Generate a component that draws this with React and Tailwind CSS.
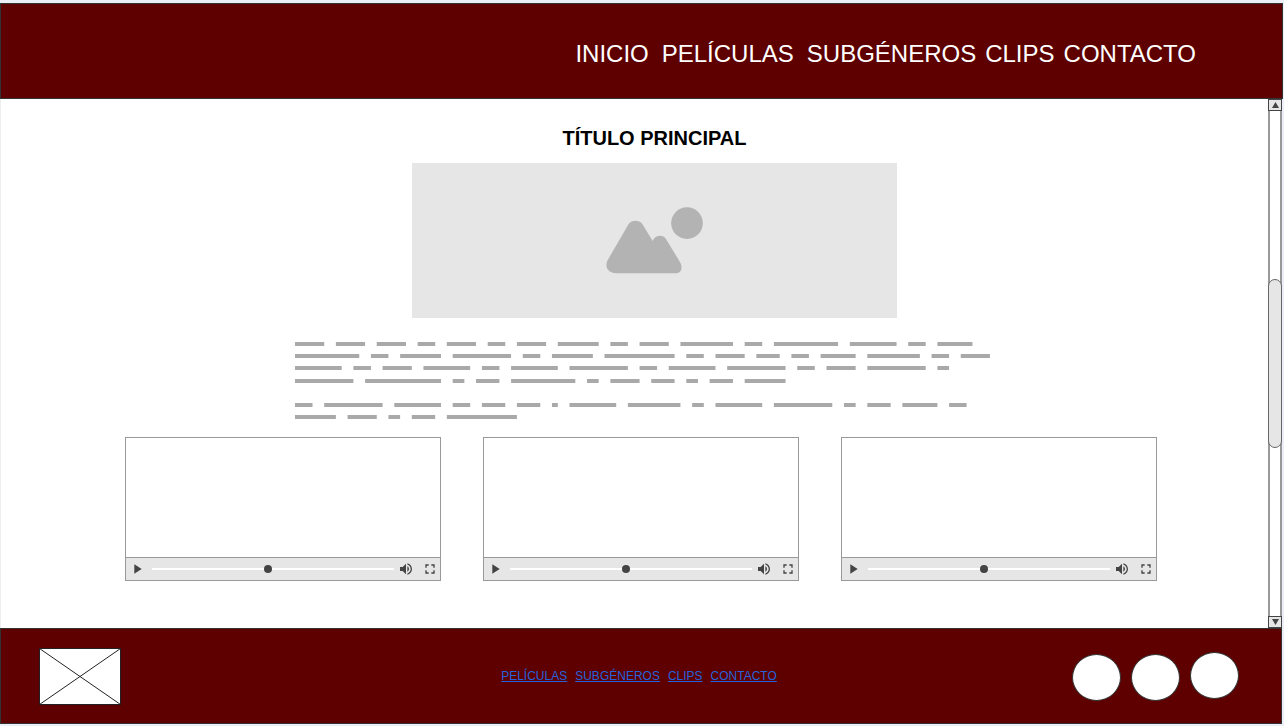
import { MdFullscreen, MdPlayArrow, MdVolumeUp } from "react-icons/md";

const UNIT = 5.84;

const paragraphs = [
  [
    { y: 0, words: [5, 5, 5, 3, 5, 3, 5, 7, 3, 5, 9, 3, 11, 8, 3, 6] },
    { y: 12, words: [11, 3, 7, 10, 3, 7, 12, 3, 5, 4, 3, 6, 9, 3, 5] },
    { y: 24, words: [8, 3, 5, 8, 3, 8, 10, 3, 8, 10, 3, 5, 10, 2] },
    { y: 37, words: [10, 13, 2, 4, 11, 2, 5, 4, 2, 4, 7] },
  ],
  [
    { y: 0, words: [3, 10, 8, 3, 4, 4, 1, 8, 9, 2, 8, 10, 2, 4, 6, 3] },
    { y: 12, words: [7, 5, 2, 4, 12] },
  ],
];

const navLinks = [
  { label: "INICIO", space: "pr-1" },
  { label: "PELÍCULAS", space: "pr-1" },
  { label: "SUBGÉNEROS", space: "" },
  { label: "CLIPS", space: "" },
  { label: "CONTACTO", space: "" },
];

const footerLinks = ["PELÍCULAS", "SUBGÉNEROS", "CLIPS", "CONTACTO"];

// Greeked text: each word is a bar, with two units of space between words.
function GreekedParagraph({ lines }) {
  const height = lines[lines.length - 1].y + 4;
  return (
    <svg
      className="block max-w-full fill-[#a9a9a9]"
      width="720"
      height={height}
      viewBox={`0 0 720 ${height}`}
      aria-hidden="true"
    >
      {lines.map(({ y, words }) => {
        let start = 0;
        return words.map((length, i) => {
          const x = start * UNIT;
          start += length + 2;
          return <rect key={`${y}-${i}`} x={x} y={y} width={length * UNIT} height="4" />;
        });
      })}
    </svg>
  );
}

function ImagePlaceholder() {
  return (
    <div className="flex h-[155px] w-full max-w-[485px] items-center justify-center bg-[#e6e6e6]">
      <svg className="fill-[#b3b3b3]" width="97" height="67" viewBox="49 36 291 201" aria-hidden="true">
        <path d="M117 87 C127 74 148 74 158 87 L189 138 C198 118 220 119 229 132 L272 203 C281 221 273 235 257 235 L80 235 C55 234 45 217 53 197 Z" />
        <circle cx="292" cy="84.500" r="47.500" />
      </svg>
    </div>
  );
}

function VideoPlayer({ number }) {
  return (
    <div className="border border-[#999999] bg-white">
      <div className="h-[119px]" />
      <div className="flex h-[23px] items-center border-t border-[#999999] bg-[#e6e6e6] pr-0.5 pl-[3px] text-[#444444]">
        <button type="button" aria-label="Reproducir" className="shrink-0">
          <MdPlayArrow size={16} className="block" />
        </button>
        <input
          type="range"
          min="0"
          max="100"
          defaultValue="48"
          aria-label={`Progreso del clip ${number}`}
          className="mr-1 ml-[7px] h-4 min-w-0 flex-1 appearance-none bg-transparent [&::-webkit-slider-runnable-track]:h-0.5 [&::-webkit-slider-runnable-track]:bg-white [&::-webkit-slider-thumb]:-mt-[3px] [&::-webkit-slider-thumb]:size-2 [&::-webkit-slider-thumb]:appearance-none [&::-webkit-slider-thumb]:rounded-full [&::-webkit-slider-thumb]:bg-[#444444]"
        />
        <button type="button" aria-label="Volumen" className="mr-2 shrink-0">
          <MdVolumeUp size={16} className="block" />
        </button>
        <button type="button" aria-label="Pantalla completa" className="shrink-0">
          <MdFullscreen size={16} className="block" />
        </button>
      </div>
    </div>
  );
}

function ScrollButton({ label, points }) {
  return (
    <button
      type="button"
      aria-label={label}
      className="flex h-3 w-full shrink-0 items-center justify-center border border-[#444444] bg-[#e6e6e6]"
    >
      <svg className="fill-[#444444]" width="7" height="6" viewBox="0 0 7 6">
        <polygon points={points} />
      </svg>
    </button>
  );
}

function ScrollBar() {
  return (
    <div className="mr-0.5 flex w-3.5 shrink-0 flex-col">
      <ScrollButton label="Subir" points="3.5,0 7,6 0,6" />
      <div className="flex flex-1 flex-col border-x-2 border-[#999999] bg-white">
        <div className="flex-1" />
        <div className="-mx-0.5 flex-1 rounded-full border border-[#666666] bg-[#e6e6e6]" />
        <div className="flex-1" />
      </div>
      <ScrollButton label="Bajar" points="0,0 7,0 3.5,6" />
    </div>
  );
}

export default function App() {
  return (
    <div className="min-h-screen bg-[#eceff6] pt-[3px] font-['Liberation_Sans',Arial,sans-serif]">
      <header className="mr-px flex h-24 items-center justify-end border border-[#333333] bg-[#5e0000] pr-[86px]">
        <nav aria-label="Principal">
          <ul className="flex gap-[9px] pt-1.5 text-2xl text-white">
            {navLinks.map(({ label, space }) => (
              <li key={label} className={space}>
                <a href="#">{label}</a>
              </li>
            ))}
          </ul>
        </nav>
      </header>

      <div className="flex">
        <main className="min-w-0 flex-1 border-l border-[#eeeeee] bg-white pb-[47px]">
          <section className="flex flex-col items-center pt-[25px] pl-10">
            <h1 className="text-xl leading-7 font-bold text-black">TÍTULO PRINCIPAL</h1>
            <div className="flex w-full justify-center pt-[11px]">
              <ImagePlaceholder />
            </div>
            <div className="flex flex-col gap-5 pt-6">
              {paragraphs.map((lines, i) => (
                <GreekedParagraph key={i} lines={lines} />
              ))}
            </div>
          </section>
          <section className="flex justify-center pt-[18px] pl-[13px]">
            <div className="grid w-full max-w-[1032px] grid-cols-3 gap-[42px]">
              {[1, 2, 3].map((number) => (
                <VideoPlayer key={number} number={number} />
              ))}
            </div>
          </section>
        </main>
        <ScrollBar />
      </div>

      <footer className="mr-0.5 grid h-24 grid-cols-[1fr_auto_1fr] items-center border border-[#333333] bg-[#5e0000]">
        <svg className="ml-[38px] stroke-[#222222]" width="82" height="57" viewBox="0 0 82 57" aria-hidden="true">
          <rect x="0.5" y="0.5" width="81" height="56" fill="white" />
          <path d="M0.5 0.5 L81.500 56.500 M81.500 0.5 L0.5 56.500" />
        </svg>
        <nav aria-label="Pie de página" className="pr-1">
          <ul className="flex gap-2 text-xs text-[#2463dc]">
            {footerLinks.map((label) => (
              <li key={label}>
                <a href="#" className="underline underline-offset-1">
                  {label}
                </a>
              </li>
            ))}
          </ul>
        </nav>
        <div className="mr-[42px] flex items-end justify-end gap-2.5">
          <div className="h-[47px] w-[49px] rounded-[50%] border border-[#333333] bg-white" />
          <div className="h-[47px] w-[49px] rounded-[50%] border border-[#333333] bg-white" />
          <div className="mb-0.5 h-[47px] w-[49px] rounded-[50%] border border-[#333333] bg-white" />
        </div>
      </footer>
    </div>
  );
}
